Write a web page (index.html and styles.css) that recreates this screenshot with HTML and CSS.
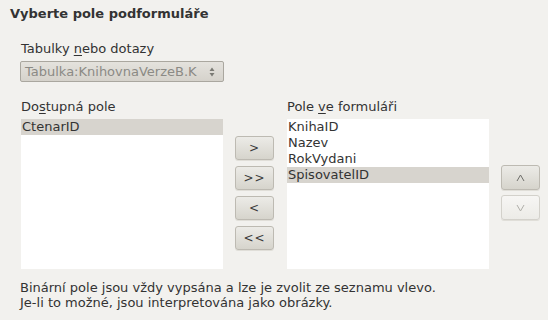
FILE: index.html
```html
<!DOCTYPE html>
<html>
<head>
<meta charset="utf-8">
<link rel="stylesheet" href="styles.css">
</head>
<body>
<div class="page">
  <div class="title">Vyberte pole podformuláře</div>
  <div class="tables">
    <div class="label">Tabulky <u>n</u>ebo dotazy</div>
    <div class="combo">
      <span class="combo-text">Tabulka:KnihovnaVerzeB.K</span>
      <svg class="spin" width="8" height="12" viewBox="0 0 8 12"><path d="M4 1.5 L6.5 5 L1.5 5 Z M1.5 7 L6.5 7 L4 10.5 Z" fill="#7a7a74"/></svg>
    </div>
  </div>
  <div class="fields">
    <div class="col">
      <div class="label">Do<u>s</u>tupná pole</div>
      <div class="list">
        <div class="item sel">CtenarID</div>
      </div>
    </div>
    <div class="btns">
      <div class="btn">&gt;</div>
      <div class="btn">&gt;&gt;</div>
      <div class="btn">&lt;</div>
      <div class="btn">&lt;&lt;</div>
    </div>
    <div class="col">
      <div class="label">Pole <u>v</u>e formuláři</div>
      <div class="list">
        <div class="item">KnihaID</div>
        <div class="item">Nazev</div>
        <div class="item">RokVydani</div>
        <div class="item sel">SpisovatelID</div>
      </div>
    </div>
    <div class="updown">
      <div class="btn small"><svg width="9" height="8" viewBox="0 0 9 8"><path d="M1 7 L4.5 1 L8 7" fill="none" stroke="#6e6e6a" stroke-width="1"/></svg></div>
      <div class="btn small disabled"><svg width="9" height="8" viewBox="0 0 9 8"><path d="M1 1 L4.5 7 L8 1" fill="none" stroke="#b0afaa" stroke-width="1"/></svg></div>
    </div>
  </div>
  <div class="note">Binární pole jsou vždy vypsána a lze je zvolit ze seznamu vlevo.<br>Je-li to možné, jsou interpretována jako obrázky.</div>
</div>
</body>
</html>
```
FILE: styles.css
```css
html, body {
  margin: 0;
  padding: 0;
  background: #f2f1ee;
}
.page {
  width: 548px;
  height: 320px;
  box-sizing: border-box;
  font-family: "DejaVu Sans", sans-serif;
  font-size: 13px;
  color: #333333;
  padding-top: 6px;
}
.title {
  font-weight: bold;
  padding-left: 10px;
  height: 16px;
  line-height: 16px;
}
.tables {
  padding-left: 20px;
  margin-top: 19px;
}
.label {
  padding-left: 1px;
  height: 16px;
  line-height: 16px;
}
.label u {
  text-decoration-thickness: 1px;
  text-underline-offset: 2px;
}
.combo {
  margin-top: 4px;
  width: 204px;
  height: 21px;
  box-sizing: border-box;
  border: 1px solid #aaa79f;
  border-radius: 2px;
  background: linear-gradient(#e4e2dd, #d5d2cb);
  display: flex;
  align-items: center;
  justify-content: space-between;
  padding: 0 7px 0 4px;
}
.combo-text {
  color: #8b8a85;
}
.spin {
  display: block;
}
.fields {
  display: flex;
  padding-left: 21px;
  margin-top: 17px;
}
.col {
  width: 202px;
  display: flex;
  flex-direction: column;
}
.col .label {
  padding-left: 0;
  margin-bottom: 4px;
}
.list {
  background: #ffffff;
  height: 150px;
}
.item {
  height: 16px;
  line-height: 16px;
  padding-left: 1px;
}
.item.sel {
  background: #d7d4ce;
}
.btns {
  display: flex;
  flex-direction: column;
  gap: 6px;
  width: 39px;
  margin: 37px 13px 0 12px;
}
.btn {
  height: 24px;
  box-sizing: border-box;
  border: 1px solid #bdbab2;
  border-radius: 3px;
  background: linear-gradient(#ecebe7, #d6d4cc);
  display: flex;
  align-items: center;
  justify-content: center;
  color: #3a3a3a;
  font-size: 12px;
  letter-spacing: 1px;
  box-shadow: 0 1px 0 #e0ded8;
}
.updown {
  display: flex;
  flex-direction: column;
  gap: 5px;
  width: 39px;
  margin: 66px 0 0 12px;
}
.btn.small {
  height: 25px;
}
.btn svg {
  display: block;
}
.btn.disabled {
  background: linear-gradient(#f7f6f4, #ecebe7);
  border-color: #d3d1cb;
}
.note {
  padding-left: 20px;
  margin-top: 11px;
  line-height: 15px;
}
```
